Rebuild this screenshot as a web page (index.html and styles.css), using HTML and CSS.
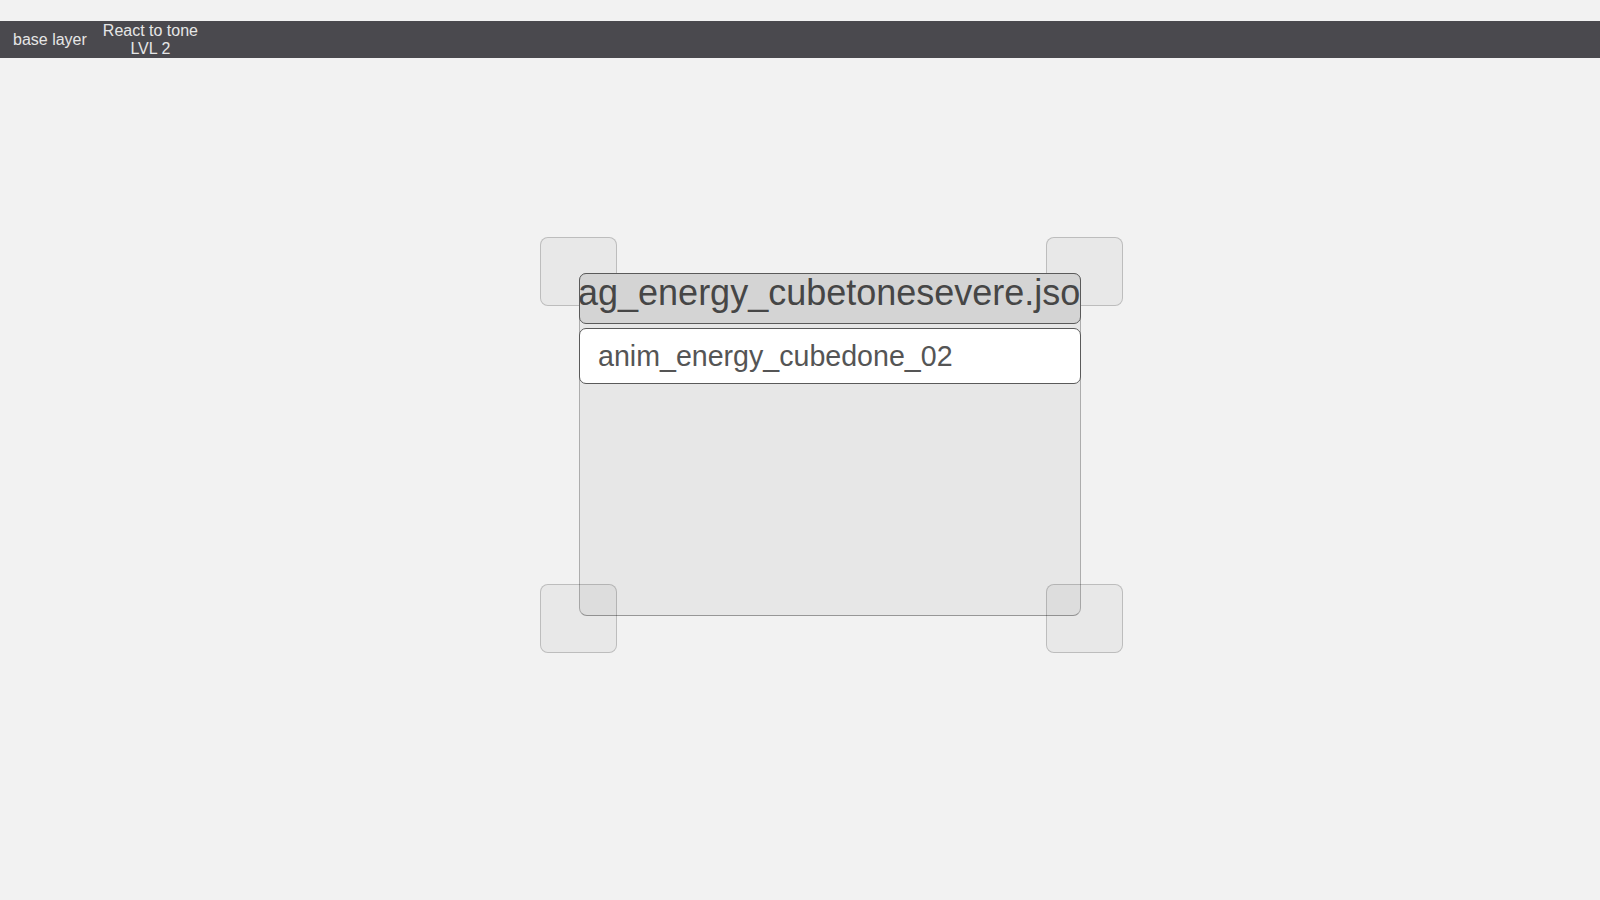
FILE: index.html
```html
<!DOCTYPE html>
<html>
<head>
<meta charset="utf-8">
<link rel="stylesheet" href="styles.css">
</head>
<body>
<div class="topbar">
  <div class="tab">base layer</div>
  <div class="tab tab-two">React to tone<br>LVL 2</div>
</div>
<div class="stage">
  <div class="frame">
    <div class="panel">
      <div class="panel-body"></div>
      <div class="file-name">ag_energy_cubetonesevere.jso</div>
      <div class="anim-field">anim_energy_cubedone_02</div>
    </div>
    <div class="handle h-tl"></div>
    <div class="handle h-tr"></div>
    <div class="handle h-bl"></div>
    <div class="handle h-br"></div>
  </div>
</div>
</body>
</html>
```

FILE: styles.css
```css
html, body {
  margin: 0;
  padding: 0;
  background: #f2f2f2;
  font-family: "Liberation Sans", Arial, sans-serif;
}

.topbar {
  margin-top: 21px;
  height: 37px;
  background: #4a494e;
  display: flex;
  align-items: center;
  padding-left: 13px;
  gap: 16px;
  color: #e6e6e6;
  font-size: 16px;
  line-height: 18px;
}

.tab-two {
  text-align: center;
}

.stage {
  padding-top: 179px;
  padding-left: 540px;
}

.frame {
  position: relative;
  width: 582px;
  height: 416px;
  padding: 36px 0 0 39px;
  box-sizing: border-box;
}

.panel {
  position: relative;
  z-index: 1;
  width: 502px;
  height: 343px;
  display: flex;
  flex-direction: column;
  gap: 4px;
}

.panel-body {
  position: absolute;
  inset: 0;
  background: rgba(0, 0, 0, 0.045);
  border: 1px solid rgba(0, 0, 0, 0.25);
  border-bottom-color: rgba(0, 0, 0, 0.35);
  border-radius: 8px;
  box-sizing: border-box;
}

.handle {
  position: absolute;
  width: 77px;
  height: 69px;
  box-sizing: border-box;
  background: rgba(0, 0, 0, 0.04);
  border: 1px solid rgba(0, 0, 0, 0.19);
  border-radius: 8px;
}

.h-tl { left: 0; top: 0; z-index: 0; }
.h-tr { left: 506px; top: 0; z-index: 0; }
.h-bl { left: 0; top: 347px; z-index: 2; }
.h-br { left: 506px; top: 347px; z-index: 2; }

.file-name {
  position: relative;
  z-index: 3;
  height: 51px;
  box-sizing: border-box;
  background: #d4d4d4;
  border: 1px solid #5a5a5a;
  border-radius: 7px;
  color: #464646;
  font-size: 36px;
  line-height: 38px;
  text-indent: -2px;
  white-space: nowrap;
  overflow: hidden;
}

.anim-field {
  position: relative;
  z-index: 3;
  height: 56px;
  box-sizing: border-box;
  background: #ffffff;
  border: 1px solid #5a5a5a;
  border-radius: 7px;
  color: #555555;
  font-size: 28.6px;
  line-height: 54px;
  padding-left: 18px;
  white-space: nowrap;
}
```
